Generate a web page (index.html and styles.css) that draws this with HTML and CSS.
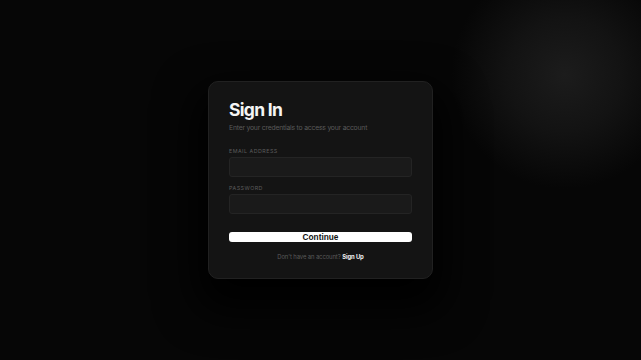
FILE: index.html
```html
<!DOCTYPE html>
<html lang="en">
<head>
<meta charset="utf-8">
<title>Sign In</title>
<link rel="stylesheet" href="styles.css">
</head>
<body>
<main class="page">
  <div class="glow"></div>
  <form class="card">
    <h1 class="title">Sign In</h1>
    <p class="subtitle">Enter your credentials to access your account</p>
    <div class="field">
      <label class="label" for="email">EMAIL ADDRESS</label>
      <input class="input" id="email" type="email">
    </div>
    <div class="field">
      <label class="label" for="password">PASSWORD</label>
      <input class="input" id="password" type="password">
    </div>
    <button class="btn" type="button">Continue</button>
    <p class="footer">Don't have an account? <a class="link" href="#">Sign Up</a></p>
  </form>
</main>
</body>
</html>
```
FILE: styles.css
```css
* { box-sizing: border-box; }
html, body { margin: 0; padding: 0; background: #060606; }
body { font-family: Inter, "Noto Sans", sans-serif; color: #fff; }
.page {
  position: relative;
  width: 641px;
  height: 360px;
  overflow: hidden;
  display: flex;
  align-items: center;
  justify-content: center;
  background: #060606;
}
.glow {
  position: absolute;
  left: 450px;
  top: -40px;
  width: 230px;
  height: 230px;
  border-radius: 50%;
  background: radial-gradient(circle, rgba(28,28,28,1) 0%, rgba(22,22,22,0.8) 35%, rgba(6,6,6,0) 70%);
}
.card {
  position: relative;
  width: 225px;
  padding: 17px 20px 17px;
  background: #141414;
  border: 1px solid #212121;
  border-radius: 10px;
  box-shadow: 0 20px 40px 12px rgba(0,0,0,0.95);
  display: flex;
  flex-direction: column;
}
.title {
  margin: 0;
  font-size: 17.5px;
  line-height: 22px;
  font-weight: 700;
  letter-spacing: -0.7px;
  color: #f5f5f5;
}
.subtitle {
  margin: 2px 0 0;
  font-size: 6.8px;
  line-height: 10px;
  letter-spacing: -0.2px;
  color: #5a5a5a;
}
.field { display: flex; flex-direction: column; margin-top: 14px; }
.field + .field { margin-top: 7px; }
.label {
  font-size: 5.3px;
  line-height: 8px;
  letter-spacing: 0.5px;
  color: #5c5c5c;
  margin-bottom: 2px;
}
.input {
  height: 20px;
  width: 100%;
  background: #1a1a1a;
  border: 1px solid #242424;
  border-radius: 3px;
  outline: none;
}
.btn {
  margin-top: 18px;
  height: 10px;
  padding: 0;
  border: none;
  border-radius: 3px;
  background: #fff;
  color: #111;
  font-family: "Liberation Sans", Arial, sans-serif;
  font-weight: 700;
  font-size: 8.3px;
  line-height: 10px;
}
.footer {
  margin: 10px 0 0;
  text-align: center;
  font-size: 5.9px;
  line-height: 9px;
  letter-spacing: -0.1px;
  color: #5a5a5a;
}
.link { color: #eee; font-weight: 700; text-decoration: none; }
```
